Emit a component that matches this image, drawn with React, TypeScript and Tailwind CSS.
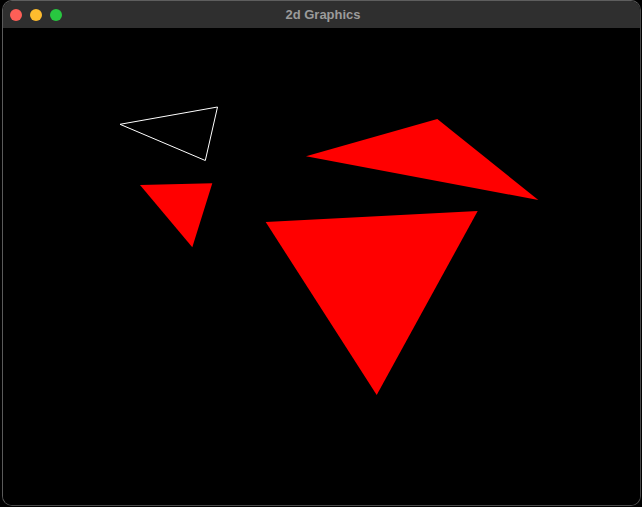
export default function App() {
  return (
    <div className="w-[642px] h-[507px] bg-black pl-[2px] pr-[1px] pb-[1px] flex">
      <div className="flex-1 flex flex-col rounded-[10px] border border-[#4a4a4a] border-t-[#5e5e5e] border-l-[#5a5a5a] overflow-hidden bg-black">
        <div className="relative h-[27px] bg-[#2f2f2f] flex items-center shrink-0">
          <div className="flex items-center gap-[8px] pl-[7px]">
            <span className="block w-[12px] h-[12px] rounded-full bg-[#fe5f57]" />
            <span className="block w-[12px] h-[12px] rounded-full bg-[#febc2e]" />
            <span className="block w-[12px] h-[12px] rounded-full bg-[#28c840]" />
          </div>
          <div
            className="absolute inset-0 flex items-center justify-center text-[13px] font-bold text-[#9b9b9b] pl-[3px]"
            style={{ fontFamily: '"Liberation Sans", Arial, sans-serif' }}
          >
            2d Graphics
          </div>
        </div>
        <div className="flex-1 bg-black">
          <svg width="637" height="477" viewBox="3 28 637 477" className="block">
            <polygon
              points="120,124.3 217.5,107 205.3,160.5"
              fill="none"
              stroke="#ffffff"
              strokeWidth="1"
            />
            <polygon points="140,185 212.3,183.3 192.3,247.3" fill="#ff0000" />
            <polygon points="306,156.3 437.3,119 538.3,200" fill="#ff0000" />
            <polygon points="265.7,222 477.7,211 376.7,395" fill="#ff0000" />
          </svg>
        </div>
      </div>
    </div>
  );
}
